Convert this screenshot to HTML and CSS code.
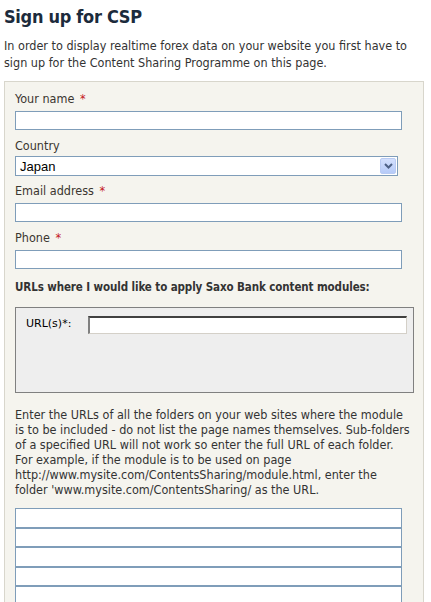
FILE: index.html
```html
<!DOCTYPE html>
<html>
<head>
<meta charset="utf-8">
<link rel="stylesheet" href="styles.css">
</head>
<body>
<h1 class="title">Sign up for CSP</h1>
<p class="intro">In order to display realtime forex data on your website you first have to sign up for the Content Sharing Programme on this page.</p>
<div class="formbox">
  <div class="field">
    <label class="lbl">Your name <span class="req">*</span></label>
    <input class="txt" type="text">
  </div>
  <div class="field">
    <label class="lbl lbl-sel">Country</label>
    <div class="select">
      <span class="sel-value">Japan</span>
      <span class="sel-btn"><svg width="9" height="6" viewBox="0 0 9 6"><path d="M1 1 L4.5 4.5 L8 1" fill="none" stroke="#4d6185" stroke-width="2"/></svg></span>
    </div>
  </div>
  <div class="field">
    <label class="lbl">Email address <span class="req">*</span></label>
    <input class="txt" type="text">
  </div>
  <div class="field">
    <label class="lbl">Phone <span class="req">*</span></label>
    <input class="txt" type="text">
  </div>
  <div class="urls-head">URLs where I would like to apply Saxo Bank content modules:</div>
  <div class="urlbox">
    <span class="url-lbl">URL(s)*:</span>
    <span class="url-input"></span>
  </div>
  <p class="help">Enter the URLs of all the folders on your web sites where the module is to be included - do not list the page names themselves. Sub-folders of a specified URL will not work so enter the full URL of each folder. For example, if the module is to be used on page http://www.mysite.com/ContentsSharing/module.html, enter the folder 'www.mysite.com/ContentsSharing/ as the URL.</p>
  <div class="stack">
    <input class="txt st" type="text">
    <input class="txt st" type="text">
    <input class="txt st" type="text">
    <input class="txt st" type="text">
    <input class="txt st" type="text">
  </div>
</div>
</body>
</html>
```
FILE: styles.css
```css
html, body { margin: 0; padding: 0; background: #fff; }
html { height: 602px; overflow: hidden; }
body {
  padding: 0 4px;
  font-family: "DejaVu Sans Condensed", "DejaVu Sans", sans-serif;
  font-size: 12.5px;
  color: #333;
}
.title {
  margin: 0;
  padding-top: 4px;
  font-size: 18px;
  letter-spacing: -0.3px;
  line-height: 26px;
  font-weight: bold;
  color: #1c2b3c;
}
.intro {
  margin: 7px 0 10px;
  line-height: 17px;
  width: 420px;
}
.formbox {
  box-sizing: border-box;
  width: 420px;
  border: 1px solid #d8d6cc;
  border-bottom: 0;
  background: #f5f4ee;
  padding: 9px 10px 0;
  height: 521px;
  overflow: hidden;
}
.field { margin-bottom: 8px; }
.lbl {
  display: block;
  line-height: 16px;
  margin-bottom: 4px;
  color: #3b3630;
}
.lbl-sel { margin-bottom: 2px; }
.req { color: #c4161c; margin-left: 2px; }
.txt {
  display: block;
  box-sizing: border-box;
  width: 387px;
  height: 19px;
  margin: 0;
  border: 1px solid #7f9db9;
  background: #fff;
  padding: 0;
}
.select {
  box-sizing: border-box;
  width: 383px;
  height: 20px;
  border: 1px solid #7f9db9;
  background: #fff;
  display: flex;
  align-items: center;
  justify-content: space-between;
  padding: 0 1px 0 4px;
  margin-bottom: -1px;
}
.sel-value {
  font-family: "Liberation Sans", Arial, sans-serif;
  font-size: 13px;
  color: #000;
}
.sel-btn {
  width: 16px;
  height: 16px;
  background: linear-gradient(#d3e0fd, #b6cbf8);
  border: 1px solid #b9cbf3;
  box-sizing: border-box;
  border-radius: 2px;
  display: flex;
  align-items: center;
  justify-content: center;
}
.urls-head {
  font-weight: bold;
  font-size: 11.5px;
  letter-spacing: -0.1px;
  line-height: 16px;
  margin-top: 10px;
  color: #333;
  white-space: nowrap;
}
.urlbox {
  margin-top: 12px;
  box-sizing: border-box;
  width: 399px;
  height: 86px;
  border: 1px solid #808080;
  background: #eeeeee;
  display: flex;
  align-items: flex-start;
  padding: 8px 0 0 10px;
}
.url-lbl {
  font-family: "DejaVu Sans", sans-serif;
  font-size: 11px;
  color: #000;
  line-height: 16px;
  width: 62px;
}
.url-input {
  box-sizing: border-box;
  width: 319px;
  height: 18px;
  background: #fff;
  border-top: 2px solid #404040;
  border-left: 2px solid #808080;
  border-right: 1px solid #d4d0c8;
  border-bottom: 1px solid #d4d0c8;
}
.help {
  margin: 14px 0 11px;
  line-height: 15px;
  width: 398px;
}
.stack .st { height: 19.5px; }
```
